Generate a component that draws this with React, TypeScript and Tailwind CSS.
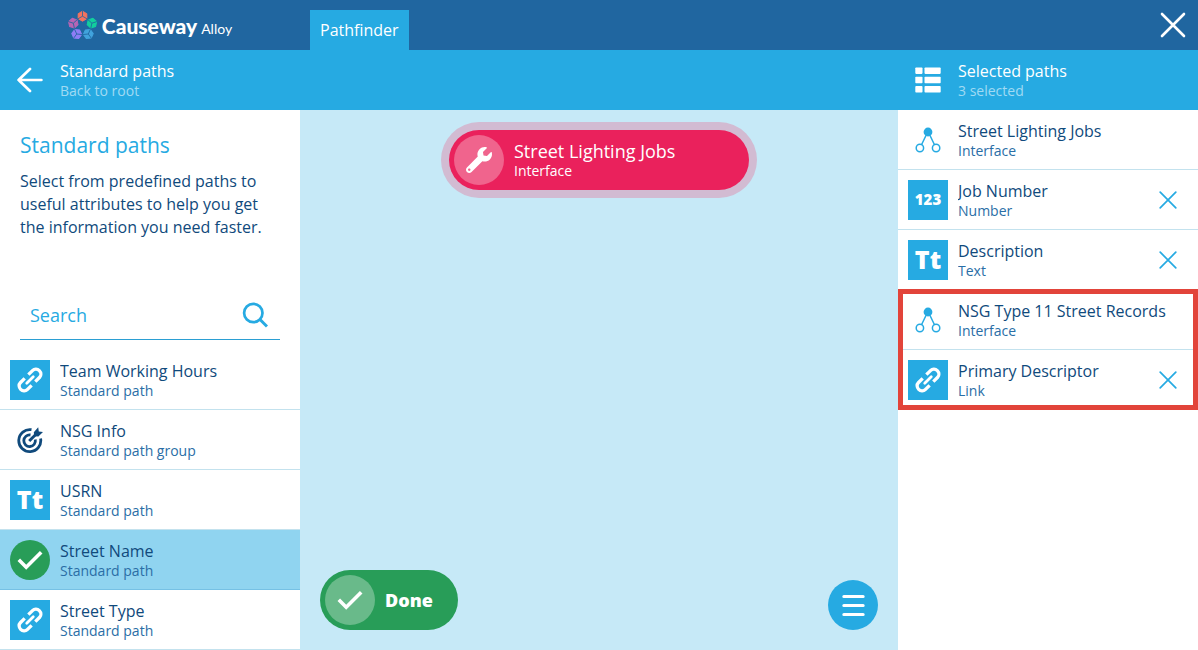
import type { ReactNode } from "react";
import { FaWrench } from "react-icons/fa";

function LinkIcon() {
  return (
    <svg viewBox="-15 -15 30 30" className="size-[30px]" fill="none" stroke="currentColor" strokeWidth="3.3" aria-hidden="true">
      <g transform="rotate(-45)">
        <path d="M-2.6 -4.9H-8.8A4.4 4.9 0 0 0 -13.2 0A4.4 4.9 0 0 0 -8.8 4.9H-2.6" />
        <path d="M2.6 -4.9H8.8A4.4 4.9 0 0 1 13.2 0A4.4 4.9 0 0 1 8.8 4.9H2.6" />
        <path d="M-4.6 0H4.6" strokeLinecap="round" strokeWidth="2.8" />
      </g>
    </svg>
  );
}

function TargetIcon() {
  return (
    <svg viewBox="0 0 26 26" className="size-[26px]" fill="none" stroke="currentColor" strokeWidth="2.8" aria-hidden="true">
      <path d="M14.5 2.7A11 11 0 1 0 23.6 11.6" />
      <path d="M13.5 8A5.8 5.8 0 1 0 18.3 12.6" />
      <path d="M12.2 14L20 6.2" strokeWidth="3" />
      <path d="M16.8 5.2L21.2 0.2L21.8 4.4L26 5L21.4 9.6L17.2 9.2Z" fill="currentColor" stroke="none" />
    </svg>
  );
}

function CheckIcon() {
  return (
    <svg viewBox="0 0 26 26" className="size-[26px]" fill="none" stroke="currentColor" strokeWidth="3.6" aria-hidden="true">
      <path d="M1.8 12.8L9.2 20.2L24.2 5.2" />
    </svg>
  );
}

function NodesIcon() {
  return (
    <svg viewBox="0 0 26 26" className="size-[26px]" fill="none" stroke="currentColor" strokeWidth="1.5" aria-hidden="true">
      <path d="M11.7 7L6.4 18M14.3 7L19.6 18" />
      <circle cx="13" cy="5" r="4.4" fill="currentColor" stroke="none" />
      <circle cx="4.9" cy="21" r="3.7" />
      <circle cx="21.1" cy="21" r="3.7" />
    </svg>
  );
}

function CloseIcon() {
  return (
    <svg viewBox="0 0 18 18" className="size-[18px]" fill="none" stroke="currentColor" strokeWidth="1.7" strokeLinecap="round" aria-hidden="true">
      <path d="M1.2 1.2L16.8 16.8M16.8 1.2L1.2 16.8" />
    </svg>
  );
}

function Hexagon({ x, y, color, turn }: { x: number; y: number; color: string; turn: number }) {
  return (
    <g transform={`translate(${x} ${y}) rotate(${turn})`}>
      <path d="M0 -5L4.3 -2.5V2.5L0 5L-4.3 2.5V-2.5Z" fill={color} stroke={color} strokeWidth="1" strokeLinejoin="round" />
      <path d="M0 0V5.6M0 0L4.8 -2.8M0 0L-4.8 -2.8" stroke="#2066a0" strokeWidth="0.8" />
    </g>
  );
}

function Logo() {
  return (
    <a href="#home" className="flex items-center gap-1 text-white">
      <svg viewBox="0 0 30 30" className="size-[30px]" aria-hidden="true">
        <Hexagon x={14.5} y={6.2} color="#f4735e" turn={180} />
        <Hexagon x={23.9} y={13.2} color="#12cf9d" turn={252} />
        <Hexagon x={20.3} y={24} color="#41a3dd" turn={324} />
        <Hexagon x={8.7} y={24} color="#8f7df5" turn={36} />
        <Hexagon x={5.3} y={13.2} color="#b865b4" turn={108} />
      </svg>
      <span className="flex items-baseline gap-1 pt-1 font-['Lato',sans-serif]">
        <span className="text-[21px] leading-7 font-black">Causeway</span>
        <span className="text-sm leading-7">Alloy</span>
      </span>
    </a>
  );
}

type Glyph = "link" | "target" | "text" | "number" | "check" | "nodes";

function RowIcon({ glyph }: { glyph: Glyph }) {
  const tile = "flex size-10 shrink-0 items-center justify-center bg-[#26aae2] text-white";
  switch (glyph) {
    case "link":
      return <span className={tile}><LinkIcon /></span>;
    case "text":
      return <span className={`${tile} text-[25px] font-extrabold`}>Tt</span>;
    case "number":
      return <span className={`${tile} text-[15px] font-extrabold`}>123</span>;
    case "check":
      return (
        <span className="flex size-10 shrink-0 items-center justify-center rounded-full bg-[#289d58] text-white">
          <CheckIcon />
        </span>
      );
    case "target":
      return <span className="flex size-10 shrink-0 items-center justify-center text-[#104a7c]"><TargetIcon /></span>;
    case "nodes":
      return <span className="flex size-10 shrink-0 items-center justify-center text-[#26aae2]"><NodesIcon /></span>;
  }
}

function RowText({ title, subtitle }: { title: string; subtitle: string }) {
  return (
    <span className="flex min-w-0 flex-1 flex-col pt-0.5 text-left">
      <span className="truncate text-base leading-5 text-[#104a7c]">{title}</span>
      <span className="truncate text-sm leading-5 text-[#2a6ea6]">{subtitle}</span>
    </span>
  );
}

type Item = { glyph: Glyph; title: string; subtitle: string; active?: boolean; removable?: boolean };

const paths: Item[] = [
  { glyph: "link", title: "Team Working Hours", subtitle: "Standard path" },
  { glyph: "target", title: "NSG Info", subtitle: "Standard path group" },
  { glyph: "text", title: "USRN", subtitle: "Standard path" },
  { glyph: "check", title: "Street Name", subtitle: "Standard path", active: true },
  { glyph: "link", title: "Street Type", subtitle: "Standard path" },
];

const selected: Item[] = [
  { glyph: "nodes", title: "Street Lighting Jobs", subtitle: "Interface" },
  { glyph: "number", title: "Job Number", subtitle: "Number", removable: true },
  { glyph: "text", title: "Description", subtitle: "Text", removable: true },
];

const highlighted: Item[] = [
  { glyph: "nodes", title: "NSG Type 11 Street Records", subtitle: "Interface" },
  { glyph: "link", title: "Primary Descriptor", subtitle: "Link", removable: true },
];

function SelectedRow({ item }: { item: Item }) {
  return (
    <li className="flex h-15 items-center gap-2.5 border-b border-[#c3e2ee] px-2.5">
      <RowIcon glyph={item.glyph} />
      <RowText title={item.title} subtitle={item.subtitle} />
      {item.removable && (
        <button type="button" aria-label={`Remove ${item.title}`} className="flex size-10 items-center justify-center text-[#26aae2]">
          <CloseIcon />
        </button>
      )}
    </li>
  );
}

function BarTitle({ title, subtitle, children }: { title: string; subtitle: string; children: ReactNode }) {
  return (
    <>
      <span className="flex size-10 items-center justify-center">{children}</span>
      <span className="flex flex-col pt-0.5 text-left">
        <span className="text-base leading-5">{title}</span>
        <span className="text-sm leading-5 text-[#a0daf3]">{subtitle}</span>
      </span>
    </>
  );
}

export default function App() {
  return (
    <div className="flex min-h-screen flex-col bg-white font-['Open_Sans',sans-serif]">
      <header className="flex h-[50px] items-stretch bg-[#2066a0] text-white">
        <div className="flex w-[300px] shrink-0 items-center justify-center">
          <Logo />
        </div>
        <nav className="flex flex-1 items-end px-2.5">
          <a href="#pathfinder" className="flex h-10 items-center bg-[#26aae2] px-2.5 text-base">Pathfinder</a>
        </nav>
        <button type="button" aria-label="Close" className="flex w-[50px] items-center justify-center">
          <svg viewBox="0 0 26 26" className="size-[26px]" fill="none" stroke="currentColor" strokeWidth="2.6" strokeLinecap="round" aria-hidden="true">
            <path d="M2 2L24 24M24 2L2 24" />
          </svg>
        </button>
      </header>

      <div className="flex h-15 items-center justify-between bg-[#26aae2] text-white">
        <button type="button" className="flex w-[300px] items-center gap-2.5 px-2.5">
          <BarTitle title="Standard paths" subtitle="Back to root">
            <svg viewBox="0 0 26 26" className="size-[26px]" fill="none" stroke="currentColor" strokeWidth="2.7" strokeLinecap="round" strokeLinejoin="round" aria-hidden="true">
              <path d="M24.4 13H1.6M13 2L1.6 13L13 24" />
            </svg>
          </BarTitle>
        </button>
        <div className="flex w-[300px] items-center gap-2.5 px-2.5">
          <BarTitle title="Selected paths" subtitle="3 selected">
            <svg viewBox="0 0 26 26" className="size-[26px]" fill="currentColor" aria-hidden="true">
              <rect x="0.3" y="0.5" width="7.2" height="6.4" rx="0.8" />
              <rect x="9.5" y="0.5" width="16.2" height="6.4" rx="0.8" />
              <rect x="0.3" y="9.8" width="7.2" height="6.4" rx="0.8" />
              <rect x="9.5" y="9.8" width="16.2" height="6.4" rx="0.8" />
              <rect x="0.3" y="19.1" width="7.2" height="6.4" rx="0.8" />
              <rect x="9.5" y="19.1" width="16.2" height="6.4" rx="0.8" />
            </svg>
          </BarTitle>
        </div>
      </div>

      <div className="flex flex-1 items-stretch">
        <aside className="flex w-[300px] shrink-0 flex-col">
          <div className="flex flex-col gap-2.5 px-5 pt-5 pb-[51px]">
            <h1 className="text-[21px] leading-[30px] text-[#26aae2]">Standard paths</h1>
            <p className="text-base leading-[23px] text-[#104a7c]">
              Select from predefined paths to useful attributes to help you get the information you need faster.
            </p>
          </div>
          <div className="mx-5 mb-2.5 flex h-[50px] items-center border-b border-[#2b9fd3] pr-3 pl-2.5 text-[#26aae2]">
            <input
              type="search"
              aria-label="Search"
              placeholder="Search"
              className="min-w-0 flex-1 bg-transparent text-lg outline-none placeholder:text-[#26aae2]"
            />
            <svg viewBox="0 0 26 26" className="size-[26px]" fill="none" stroke="currentColor" strokeWidth="2.7" aria-hidden="true">
              <circle cx="11.3" cy="11" r="9.2" />
              <path d="M18 17.5L25 24.5" strokeWidth="3" />
            </svg>
          </div>
          <ul>
            {paths.map((item) => (
              <li key={item.title}>
                <button
                  type="button"
                  className={
                    item.active
                      ? "flex h-15 w-full items-center gap-2.5 border-b border-[#76c1e5] bg-[#90d4f0] px-2.5"
                      : "flex h-15 w-full items-center gap-2.5 border-b border-[#c3e2ee] px-2.5"
                  }
                >
                  <RowIcon glyph={item.glyph} />
                  <RowText title={item.title} subtitle={item.subtitle} />
                </button>
              </li>
            ))}
          </ul>
        </aside>

        <main className="flex flex-1 flex-col items-center justify-between bg-[#c6e9f7] p-5 text-white">
          <button type="button" className="flex h-15 w-[300px] items-center gap-2.5 rounded-full bg-[#ea215c] px-[5px] ring-8 ring-[#d2bbd2]">
            <span className="flex size-[50px] items-center justify-center rounded-full bg-[#f0648d]">
              <FaWrench className="size-[26px]" aria-hidden="true" />
            </span>
            <span className="flex flex-col text-left">
              <span className="text-lg leading-[22px]">Street Lighting Jobs</span>
              <span className="text-sm leading-[18px]">Interface</span>
            </span>
          </button>
          <div className="flex w-full items-end justify-between">
            <button type="button" className="flex h-15 items-center gap-2.5 rounded-full bg-[#289d58] pr-[25px] pl-[5px]">
              <span className="flex size-[50px] items-center justify-center rounded-full bg-[#69ba8a]">
                <CheckIcon />
              </span>
              <span className="text-lg font-extrabold">Done</span>
            </button>
            <button type="button" aria-label="Menu" className="flex size-[50px] items-center justify-center rounded-full bg-[#26aae2]">
              <svg viewBox="0 0 26 26" className="size-[26px]" fill="none" stroke="currentColor" strokeWidth="3.2" strokeLinecap="round" aria-hidden="true">
                <path d="M3.9 4.5H23.1M3.9 13.5H23.1M3.9 22.5H23.1" />
              </svg>
            </button>
          </div>
        </main>

        <aside className="w-[300px] shrink-0">
          <ul>
            {selected.map((item) => (
              <SelectedRow key={item.title} item={item} />
            ))}
          </ul>
          <div className="relative">
            <ul>
              {highlighted.map((item) => (
                <SelectedRow key={item.title} item={item} />
              ))}
            </ul>
            <div className="pointer-events-none absolute inset-x-0 -top-px bottom-0 border-[5px] border-[#e2443a]" />
          </div>
        </aside>
      </div>
    </div>
  );
}
